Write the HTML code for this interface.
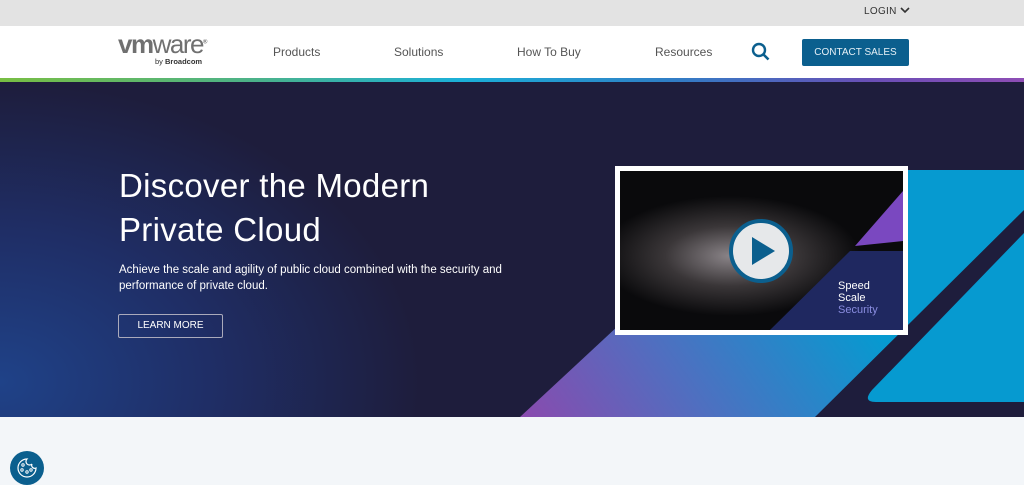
<!DOCTYPE html>
<html><head><meta charset="utf-8"><style>
*{margin:0;padding:0;box-sizing:border-box}
body{width:1024px;height:483px;overflow:hidden;font-family:"Liberation Sans",sans-serif;background:#f3f6f9;position:relative}
.top{position:absolute;left:0;top:0;width:1024px;height:26px;background:#e3e3e3}
.login{position:absolute;left:864px;top:6px;font-size:10px;color:#333;letter-spacing:.3px}
.nav{position:absolute;top:26px;left:0;width:1024px;height:52px;background:#fff}
.strip{position:absolute;top:78px;left:0;width:1024px;height:4px;background:linear-gradient(90deg,#78be43 0%,#4bb28a 25%,#1bb0d8 45%,#2f7fc6 65%,#6a4fb6 85%,#8e4db5 100%)}
.nl{position:absolute;top:45px;font-size:12px;color:#555}
.btn{position:absolute;left:802px;top:39px;width:107px;height:27px;background:#0b5f8e;color:#e6f0f6;font-size:10px;text-align:center;line-height:27px;border-radius:2px}
.hero{position:absolute;top:82px;left:0;width:1024px;height:335px;background:radial-gradient(ellipse 420px 300px at 0px 300px,#1f4288 0%,#1f2e66 50%,rgba(29,29,60,0) 100%),#1e1d3c;overflow:hidden}
h1{position:absolute;left:119px;top:164px;font-weight:normal;font-size:33px;line-height:44px;color:#fff;letter-spacing:.3px}
.p{position:absolute;left:119px;top:262px;font-size:11.5px;line-height:16px;color:#fff;width:400px}
.lm{position:absolute;left:118px;top:314px;width:105px;height:24px;border:1px solid #aab;border-radius:2px;color:#fff;font-size:10px;text-align:center;line-height:22px}
.vid{position:absolute;left:615px;top:166px;width:293px;height:169px;background:#fff;padding:5px}
.vin{position:relative;width:100%;height:100%;overflow:hidden;background:radial-gradient(ellipse 130px 60px at 110px 85px,#8a8488 0%,#3a3638 50%,#0a0a0c 100%)}
</style></head><body>
<div class="top"><div class="login">LOGIN <svg width="10" height="7" viewBox="0 0 10 7"><path d="M1 1l4 4 4-4" stroke="#333" stroke-width="1.6" fill="none"/></svg></div></div>
<div class="nav">
<div style="position:absolute;left:118px;top:3px;font-size:26px;color:#707070;letter-spacing:-1.5px;font-weight:bold">vm<span style="font-weight:normal">ware</span><sup style="font-size:6px">®</sup></div>
<div style="position:absolute;left:155px;top:31px;font-size:7.5px;color:#333">by <b>Broadcom</b></div>
</div>
<div class="nl" style="left:273px">Products</div>
<div class="nl" style="left:394px">Solutions</div>
<div class="nl" style="left:517px">How To Buy</div>
<div class="nl" style="left:655px">Resources</div>
<svg style="position:absolute;left:751px;top:42px" width="20" height="20" viewBox="0 0 20 20"><circle cx="8" cy="8" r="6" stroke="#0b5f8e" stroke-width="2.4" fill="none"/><path d="M12.5 12.5l5 5" stroke="#0b5f8e" stroke-width="2.6"/></svg>
<div class="btn">CONTACT SALES</div>
<div class="strip"></div>
<div class="hero">
<svg style="position:absolute;left:0;top:0" width="1024" height="335" viewBox="0 82 1024 335">
<defs><linearGradient id="g" x1="520" y1="417" x2="800" y2="220" gradientUnits="userSpaceOnUse"><stop offset="0" stop-color="#8a4aae"/><stop offset=".45" stop-color="#4f6fc0"/><stop offset="1" stop-color="#069ad0"/></linearGradient></defs>
<polygon points="520,417 786,170 1024,170 1024,210 815,417" fill="url(#g)"/>
<path d="M1024,233 L872,390 Q862,402 876,402 L1024,402 Z" fill="#069ad0"/>
</svg>
</div>
<h1>Discover the Modern<br>Private Cloud</h1>
<div class="p">Achieve the scale and agility of public cloud combined with the security and performance of private cloud.</div>
<div class="lm">LEARN MORE</div>
<div class="vid"><div class="vin">
<svg style="position:absolute;left:0;top:0" width="283" height="159" viewBox="0 0 283 159"><polygon points="283,20 283,70 235,75" fill="#7a48c0"/><polygon points="283,80 283,159 150,159 230,80" fill="#1f2860"/>
<text x="218" y="118" font-size="11" fill="#fff" font-family="Liberation Sans">Speed</text><text x="218" y="130" font-size="11" fill="#fff" font-family="Liberation Sans">Scale</text><text x="218" y="142" font-size="11" fill="#8a8de0" font-family="Liberation Sans">Security</text>
<circle cx="141" cy="80" r="30" fill="#e6e8ea" stroke="#0b5f8e" stroke-width="4"/><path d="M132 66 L155 80 L132 94 Z" fill="#0b5f8e"/></svg>
</div></div>
<svg style="position:absolute;left:10px;top:451px" width="34" height="34" viewBox="0 0 34 34"><circle cx="17" cy="17" r="17" fill="#0b5f8e"/><path d="M17 8a9 9 0 1 0 9 9 3 3 0 0 1-4-4 3 3 0 0 1-5-5z" stroke="#fff" stroke-width="1.2" fill="none"/><circle cx="13" cy="14" r="1.2" stroke="#fff" fill="none"/><circle cx="12" cy="19" r="1.2" stroke="#fff" fill="none"/><circle cx="17" cy="21" r="1.2" stroke="#fff" fill="none"/><circle cx="21" cy="19" r="1.2" stroke="#fff" fill="none"/></svg>
</body></html>
